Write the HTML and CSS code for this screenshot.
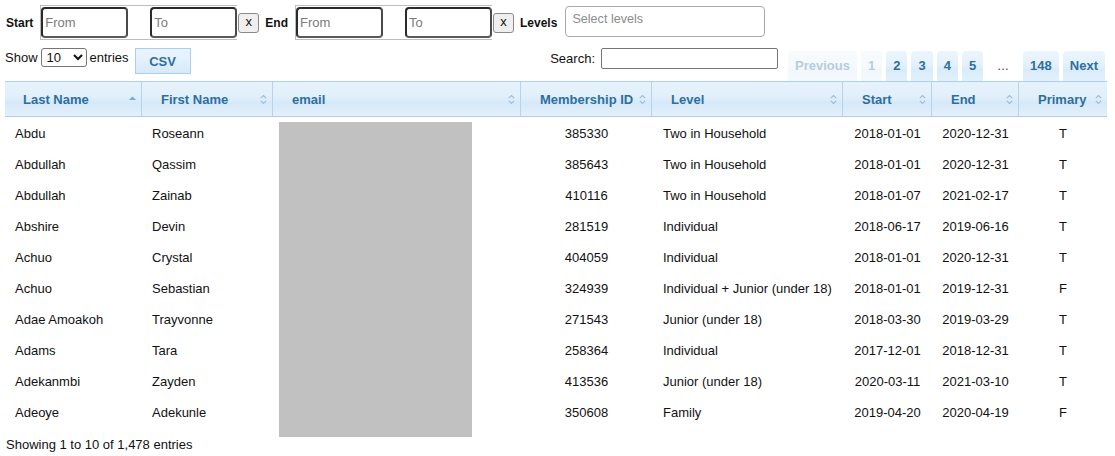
FILE: index.html
```html
<!DOCTYPE html>
<html>
<head>
<meta charset="utf-8">
<link rel="stylesheet" href="styles.css">
</head>
<body>
<div class="page">
  <div class="filters">
    <span class="lbl">Start</span>
    <div class="range"><input class="dt" placeholder="From"><input class="dt" placeholder="To"></div>
    <button class="clr">x</button>
    <span class="lbl">End</span>
    <div class="range"><input class="dt" placeholder="From"><input class="dt" placeholder="To"></div>
    <button class="clr">x</button>
    <span class="lbl">Levels</span>
    <div class="levels">Select levels</div>
  </div>

  <div class="toolbar">
    <div class="length">Show <select class="len"><option>10</option><option>25</option><option>50</option></select> entries</div>
    <button class="csv">CSV</button>
    <div class="spacer"></div>
    <label class="search">Search: <input class="search-in"></label>
    <div class="paginate">
      <span class="pg disabled">Previous</span>
      <span class="pg disabled">1</span>
      <span class="pg">2</span>
      <span class="pg">3</span>
      <span class="pg">4</span>
      <span class="pg">5</span>
      <span class="ellipsis">…</span>
      <span class="pg">148</span>
      <span class="pg">Next</span>
    </div>
  </div>

  <div class="table-wrap">
    <table class="grid">
      <colgroup>
        <col class="c-last"><col class="c-first"><col class="c-email"><col class="c-id"><col class="c-level"><col class="c-start"><col class="c-end"><col class="c-primary">
      </colgroup>
      <thead>
        <tr>
          <th><div class="th-in"><span>Last Name</span><svg class="sort" width="7" height="11" viewBox="0 0 7 11"><polygon points="0,6 3.5,2.5 7,6" fill="#77aad6"/></svg></div></th>
          <th><div class="th-in"><span>First Name</span><svg class="sort" width="7" height="11" viewBox="0 0 7 11"><path d="M0.8 4.2 L3.5 1.5 L6.2 4.2 M0.8 6.8 L3.5 9.5 L6.2 6.8" fill="none" stroke="#9bbcd9" stroke-width="1.1"/></svg></div></th>
          <th><div class="th-in"><span>email</span><svg class="sort" width="7" height="11" viewBox="0 0 7 11"><path d="M0.8 4.2 L3.5 1.5 L6.2 4.2 M0.8 6.8 L3.5 9.5 L6.2 6.8" fill="none" stroke="#9bbcd9" stroke-width="1.1"/></svg></div></th>
          <th><div class="th-in"><span>Membership ID</span><svg class="sort" width="7" height="11" viewBox="0 0 7 11"><path d="M0.8 4.2 L3.5 1.5 L6.2 4.2 M0.8 6.8 L3.5 9.5 L6.2 6.8" fill="none" stroke="#9bbcd9" stroke-width="1.1"/></svg></div></th>
          <th><div class="th-in"><span>Level</span><svg class="sort" width="7" height="11" viewBox="0 0 7 11"><path d="M0.8 4.2 L3.5 1.5 L6.2 4.2 M0.8 6.8 L3.5 9.5 L6.2 6.8" fill="none" stroke="#9bbcd9" stroke-width="1.1"/></svg></div></th>
          <th><div class="th-in"><span>Start</span><svg class="sort" width="7" height="11" viewBox="0 0 7 11"><path d="M0.8 4.2 L3.5 1.5 L6.2 4.2 M0.8 6.8 L3.5 9.5 L6.2 6.8" fill="none" stroke="#9bbcd9" stroke-width="1.1"/></svg></div></th>
          <th><div class="th-in"><span>End</span><svg class="sort" width="7" height="11" viewBox="0 0 7 11"><path d="M0.8 4.2 L3.5 1.5 L6.2 4.2 M0.8 6.8 L3.5 9.5 L6.2 6.8" fill="none" stroke="#9bbcd9" stroke-width="1.1"/></svg></div></th>
          <th class="last"><div class="th-in"><span>Primary</span><svg class="sort" width="7" height="11" viewBox="0 0 7 11"><path d="M0.8 4.2 L3.5 1.5 L6.2 4.2 M0.8 6.8 L3.5 9.5 L6.2 6.8" fill="none" stroke="#9bbcd9" stroke-width="1.1"/></svg></div></th>
        </tr>
      </thead>
      <tbody>
        <tr><td>Abdu</td><td>Roseann</td><td></td><td class="ctr">385330</td><td class="lvl">Two in Household</td><td class="ctr">2018-01-01</td><td class="ctr">2020-12-31</td><td class="ctr">T</td></tr>
        <tr><td>Abdullah</td><td>Qassim</td><td></td><td class="ctr">385643</td><td class="lvl">Two in Household</td><td class="ctr">2018-01-01</td><td class="ctr">2020-12-31</td><td class="ctr">T</td></tr>
        <tr><td>Abdullah</td><td>Zainab</td><td></td><td class="ctr">410116</td><td class="lvl">Two in Household</td><td class="ctr">2018-01-07</td><td class="ctr">2021-02-17</td><td class="ctr">T</td></tr>
        <tr><td>Abshire</td><td>Devin</td><td></td><td class="ctr">281519</td><td class="lvl">Individual</td><td class="ctr">2018-06-17</td><td class="ctr">2019-06-16</td><td class="ctr">T</td></tr>
        <tr><td>Achuo</td><td>Crystal</td><td></td><td class="ctr">404059</td><td class="lvl">Individual</td><td class="ctr">2018-01-01</td><td class="ctr">2020-12-31</td><td class="ctr">T</td></tr>
        <tr><td>Achuo</td><td>Sebastian</td><td></td><td class="ctr">324939</td><td class="lvl">Individual + Junior (under 18)</td><td class="ctr">2018-01-01</td><td class="ctr">2019-12-31</td><td class="ctr">F</td></tr>
        <tr><td>Adae Amoakoh</td><td>Trayvonne</td><td></td><td class="ctr">271543</td><td class="lvl">Junior (under 18)</td><td class="ctr">2018-03-30</td><td class="ctr">2019-03-29</td><td class="ctr">T</td></tr>
        <tr><td>Adams</td><td>Tara</td><td></td><td class="ctr">258364</td><td class="lvl">Individual</td><td class="ctr">2017-12-01</td><td class="ctr">2018-12-31</td><td class="ctr">T</td></tr>
        <tr><td>Adekanmbi</td><td>Zayden</td><td></td><td class="ctr">413536</td><td class="lvl">Junior (under 18)</td><td class="ctr">2020-03-11</td><td class="ctr">2021-03-10</td><td class="ctr">T</td></tr>
        <tr><td>Adeoye</td><td>Adekunle</td><td></td><td class="ctr">350608</td><td class="lvl">Family</td><td class="ctr">2019-04-20</td><td class="ctr">2020-04-19</td><td class="ctr">F</td></tr>
      </tbody>
    </table>
    <div class="redact"></div>
  </div>

  <div class="info">Showing 1 to 10 of 1,478 entries</div>
</div>
</body>
</html>
```

FILE: styles.css
```css
* { box-sizing: border-box; }

html, body {
  margin: 0;
  padding: 0;
  background: #fff;
}

body {
  font-family: "Liberation Sans", Arial, sans-serif;
  font-size: 13px;
  color: #111;
}

.page {
  width: 1107px;
  padding: 5px 0 0 5px;
}

/* ---------- filter row ---------- */
.filters {
  display: flex;
  align-items: center;
  height: 35px;
}

.lbl {
  font-size: 12px;
  font-weight: bold;
  color: #111;
  margin-left: 1px;
  margin-right: 7px;
}

.range {
  display: flex;
  justify-content: space-between;
  align-items: flex-start;
  width: 197px;
  height: 35px;
  padding-top: 1px;
  border: 1px solid #bdbdbd;
  border-right: none;
}

.dt {
  width: 87px;
  height: 31px;
  border: 2px solid #2a2a2a;
  border-bottom-color: #5a5a5a;
  border-right-color: #4a4a4a;
  border-radius: 4px;
  padding: 0 0 0 2px;
  font-family: "Liberation Sans", Arial, sans-serif;
  font-size: 13px;
  color: #111;
  outline: none;
  background: #fff;
}

.dt::placeholder {
  color: #7a7a7a;
}

.clr {
  width: 21px;
  height: 20px;
  margin-left: 1px;
  margin-right: 5px;
  padding: 0 0 2px;
  border: 1px solid #8a8a8a;
  border-radius: 3px;
  background: #efefef;
  font-family: "Liberation Sans", Arial, sans-serif;
  font-size: 13px;
  color: #111;
  line-height: 16px;
}

.levels {
  align-self: flex-start;
  margin-top: 1px;
  margin-left: 1px;
  width: 200px;
  height: 31px;
  border: 1px solid #aaa;
  border-radius: 4px;
  padding: 5px 0 0 6px;
  font-size: 12.6px;
  color: #8c8c8c;
  line-height: 15px;
}

/* ---------- toolbar ---------- */
.toolbar {
  display: flex;
  align-items: flex-start;
  height: 33px;
  margin-top: 8px;
}

.length {
  display: flex;
  align-items: center;
  height: 19px;
  gap: 3px;
  margin-left: 0;
}

.len {
  width: 46px;
  height: 19px;
  font-family: "Liberation Sans", Arial, sans-serif;
  font-size: 13px;
  padding: 0 0 0 1px;
  border: 1px solid #767676;
  border-radius: 3px;
  background: #fff;
  color: #111;
}

.csv {
  margin-left: 6px;
  width: 56px;
  height: 26px;
  border: 1px solid #a9cfec;
  background: linear-gradient(to bottom, #e9f4fd 0%, #e3f0fc 50%, #d7e9f9 100%);
  color: #2e6e9e;
  font-family: "Liberation Sans", Arial, sans-serif;
  font-weight: bold;
  font-size: 13px;
  padding: 0;
}

.spacer { flex: 1; }

.search {
  display: flex;
  align-items: center;
  height: 21px;
  gap: 6px;
}

.search-in {
  width: 177px;
  height: 21px;
  border: 1px solid #767676;
  border-radius: 2px;
  padding: 0 2px;
  font-family: "Liberation Sans", Arial, sans-serif;
  font-size: 13px;
}

.paginate {
  align-self: flex-end;
  display: flex;
  align-items: stretch;
  gap: 4px;
  margin-left: 10px;
  margin-right: 2px;
  height: 30px;
}

.pg {
  display: flex;
  align-items: center;
  padding: 0 7px 1px;
  border-radius: 4px 4px 0 0;
  background: linear-gradient(to bottom, #ebf5fd 0%, #e4f1fc 45%, #d9ebfa 62%, #e2f0fb 100%);
  color: #2e6e9e;
  font-weight: bold;
  font-size: 13px;
}

.pg.disabled {
  opacity: 0.35;
}

.ellipsis {
  display: flex;
  align-items: center;
  padding: 0 10px 1px 10px;
  color: #6a2a55;
  font-size: 12px;
}

/* ---------- table ---------- */
.table-wrap {
  position: relative;
}

.grid {
  width: 1102px;
  table-layout: fixed;
  border-collapse: separate;
  border-spacing: 0;
}

.c-last { width: 137px; }
.c-first { width: 131px; }
.c-email { width: 248px; }
.c-id { width: 131px; }
.c-level { width: 191px; }
.c-start { width: 89px; }
.c-end { width: 87px; }
.c-primary { width: 88px; }

.grid th {
  height: 36px;
  padding: 0;
  border-top: 1px solid #aecfea;
  border-bottom: 1px solid #aecfea;
  border-right: 1px solid #b5d4ec;
  background: linear-gradient(to bottom, #e6f2fc 0%, #e2f0fb 40%, #d6e9f9 62%, #e3f0fb 100%);
  color: #2e6e9e;
  font-weight: bold;
  font-size: 13px;
  text-align: left;
}

.grid th.last {
  border-right: none;
}

.th-in {
  display: flex;
  align-items: center;
  justify-content: space-between;
  padding: 0 5px 0 19px;
}

.grid th:first-child .th-in {
  padding-left: 18px;
}

.sort {
  flex: none;
  display: block;
}

.grid td {
  height: 31px;
  padding: 2px 10px 0;
  color: #111;
  white-space: nowrap;
  overflow: hidden;
}

.grid td.ctr {
  text-align: center;
}

.grid td.lvl {
  padding-left: 11px;
}

.redact {
  position: absolute;
  left: 274px;
  top: 41px;
  width: 193px;
  height: 315px;
  background: #c1c1c1;
}

.info {
  padding-top: 10px;
  line-height: 15px;
  margin-left: 1px;
}
```
